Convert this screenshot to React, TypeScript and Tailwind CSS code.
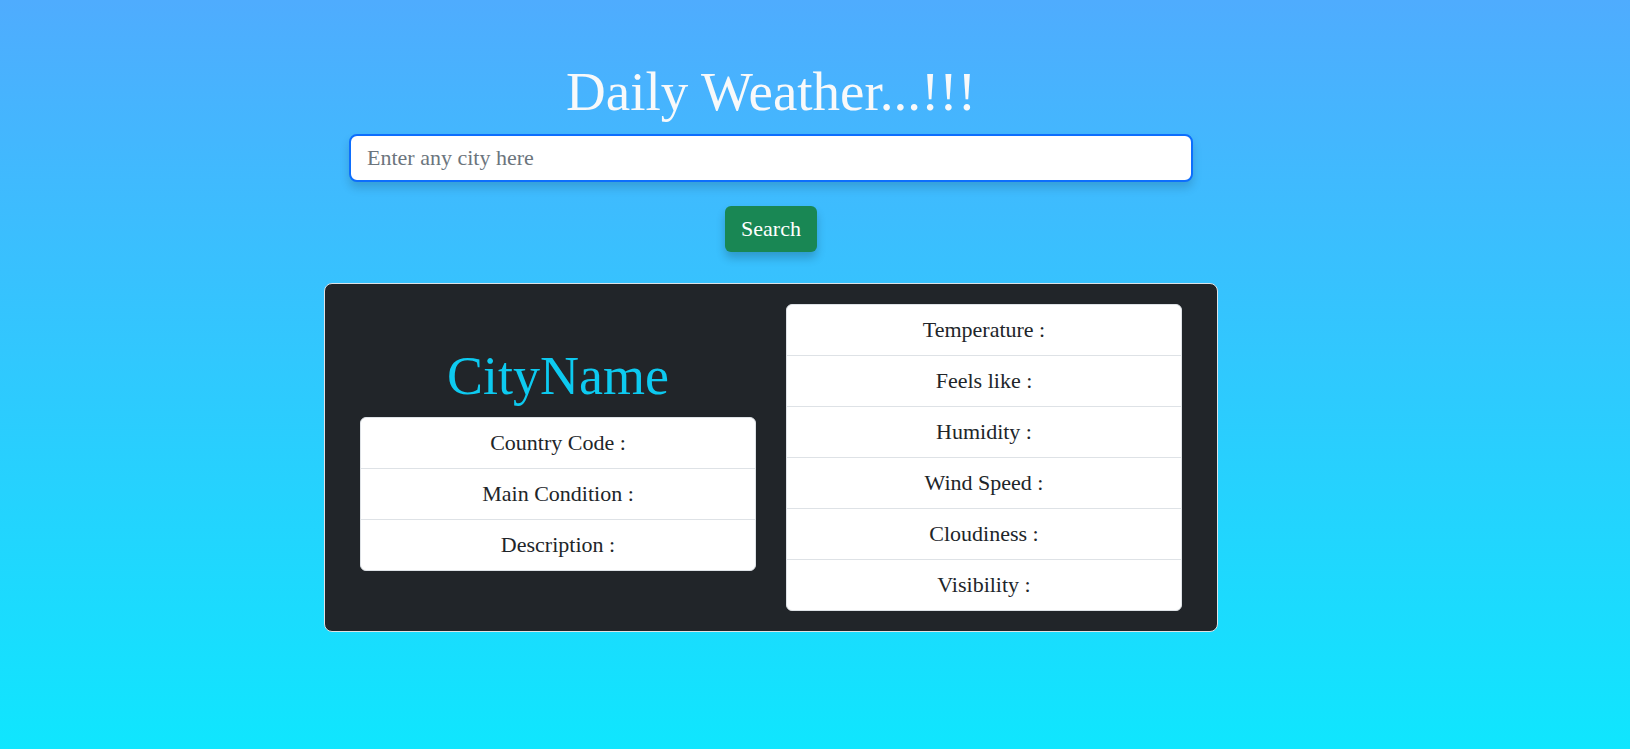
const leftRows = ["Country Code :", "Main Condition :", "Description :"];

const rightRows = [
  "Temperature :",
  "Feels like :",
  "Humidity :",
  "Wind Speed :",
  "Cloudiness :",
  "Visibility :",
];

const InfoList = ({ rows }: { rows: string[] }) => (
  <ul className="bg-white border border-[#dee2e6] rounded-md overflow-hidden text-[#212529] text-[22px] text-center">
    {rows.map((row, i) => (
      <li
        key={row}
        className={`py-[10px] leading-[30px] ${i > 0 ? "border-t border-[#dee2e6]" : ""}`}
      >
        {row}
      </li>
    ))}
  </ul>
);

const App = () => {
  return (
    <div className="min-h-screen bg-[linear-gradient(to_bottom,#4facfe,#0fe6fe)] font-['Georgia','Liberation_Serif',serif]">
      <div className="flex flex-col items-center pt-[60px] pr-[88px] pb-10">
        <h1 className="text-[55px] leading-[64px] text-[#f8f9fa]">
          Daily Weather...!!!
        </h1>

        <input
          type="text"
          placeholder="Enter any city here"
          className="mt-[10px] w-[844px] h-[48px] px-4 bg-white border-2 border-[#0d6efd] rounded-lg text-[22px] text-[#212529] placeholder:text-[#6c757d] shadow-[0_6px_10px_rgba(0,0,0,0.15)] outline-none"
        />

        <button className="mt-6 h-[46px] px-4 bg-[#198754] text-white text-[22px] leading-[28px] rounded-md shadow-[0_6px_10px_rgba(0,0,0,0.2)]">
          Search
        </button>

        {/* Card */}
        <div className="mt-[31px] w-[894px] bg-[#212529] border border-[#dee2e6] rounded-lg px-[35px] py-[20px]">
          <div className="grid grid-cols-2 gap-[30px]">
            <div className="flex flex-col justify-center">
              <h2 className="text-[54px] leading-[65px] text-[#0dcaf0] text-center mb-2">
                CityName
              </h2>
              <InfoList rows={leftRows} />
            </div>
            <div>
              <InfoList rows={rightRows} />
            </div>
          </div>
        </div>
      </div>
    </div>
  );
};

export default App;
